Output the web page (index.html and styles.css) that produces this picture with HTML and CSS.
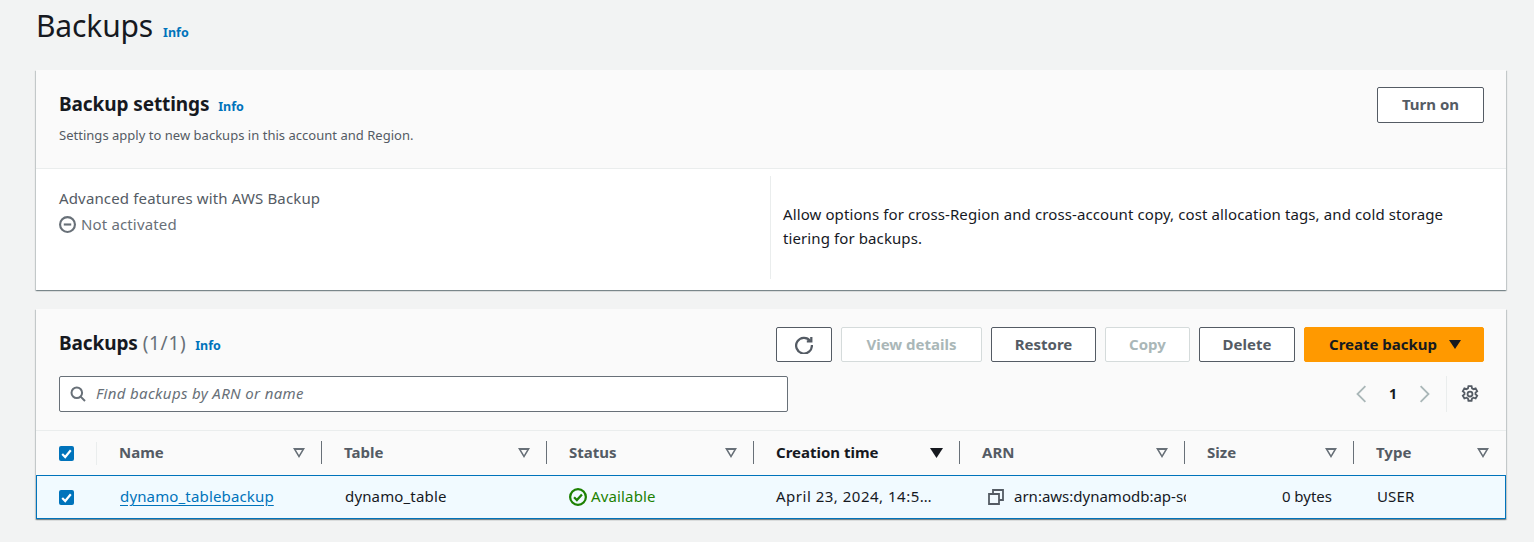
FILE: index.html
```html
<!DOCTYPE html>
<html lang="en">
<head>
  <meta charset="UTF-8" />
  <title>Backups</title>
  <link rel="stylesheet" href="styles.css">
</head>
<body>
  <div class="page-title">
    <h1>Backups</h1>
    <a class="info">Info</a>
  </div>

  <section class="card">
    <div class="card-head settings-head">
      <div>
        <h2>Backup settings <a class="info">Info</a></h2>
        <p class="desc">Settings apply to new backups in this account and Region.</p>
      </div>
      <button class="btn turn-on">Turn on</button>
    </div>
    <div class="settings-body">
      <div class="settings-left">
        <div class="label">Advanced features with AWS Backup</div>
        <div class="muted-status">
          <svg class="icon" viewBox="0 0 16 16"><circle cx="8" cy="8" r="7" /><path d="M4.5 8h7" /></svg>
          Not activated
        </div>
      </div>
      <div class="settings-right">Allow options for cross-Region and cross-account copy, cost allocation tags, and cold storage tiering for backups.</div>
    </div>
  </section>

  <section class="card backups-card">
    <div class="card-head table-head">
      <div class="table-title-row">
        <h2>Backups <span class="count">(1/1)</span> <a class="info">Info</a></h2>
        <div class="actions">
          <button class="btn icon-btn">
            <svg class="icon refresh" viewBox="0 0 16 16"><path d="M13.5 4.2A7 7 0 1 0 15 8" /><path d="M14.5 0.8v4h-4" /></svg>
          </button>
          <button class="btn disabled view-details">View details</button>
          <button class="btn restore">Restore</button>
          <button class="btn disabled copy">Copy</button>
          <button class="btn delete">Delete</button>
          <button class="btn primary">Create backup <span class="caret"></span></button>
        </div>
      </div>
      <div class="filter-row">
        <label class="search">
          <svg class="icon" viewBox="0 0 16 16"><circle cx="6.8" cy="6.8" r="5.3" /><path d="M10.6 10.6l4.4 4.4" /></svg>
          <input type="text" placeholder="Find backups by ARN or name">
        </label>
        <div class="pager">
          <svg class="icon pager-arrow" viewBox="0 0 16 16"><path d="M11 1L4 8l7 7" /></svg>
          <span class="page-no">1</span>
          <svg class="icon pager-arrow" viewBox="0 0 16 16"><path d="M5 1l7 7-7 7" /></svg>
        </div>
        <div class="prefs">
          <svg class="icon gear" viewBox="0 0 16 16"><path d="M6.6 1h2.8l.4 2 1.3.7 1.9-.7 1.4 2.5-1.5 1.3v1.4l1.5 1.3-1.4 2.5-1.9-.7-1.3.7-.4 2H6.6l-.4-2-1.3-.7-1.9.7-1.4-2.5 1.5-1.3V6.8L1.6 5.5 3 3l1.9.7 1.3-.7z" /><circle cx="8" cy="8" r="2.2" /></svg>
        </div>
      </div>
    </div>

    <div class="row header-row">
      <div class="cell check-cell"><span class="checkbox"><svg viewBox="0 0 14 14"><path d="M3 7.5l2.8 2.8L11 4" /></svg></span></div>
      <div class="cell th">Name<span class="sort"></span></div>
      <div class="cell th">Table<span class="sort"></span></div>
      <div class="cell th">Status<span class="sort"></span></div>
      <div class="cell th active">Creation time<span class="sort down"></span></div>
      <div class="cell th">ARN<span class="sort"></span></div>
      <div class="cell th">Size<span class="sort"></span></div>
      <div class="cell th last">Type<span class="sort"></span></div>
    </div>
    <div class="row body-row">
      <div class="cell check-cell"><span class="checkbox"><svg viewBox="0 0 14 14"><path d="M3 7.5l2.8 2.8L11 4" /></svg></span></div>
      <div class="cell"><a class="link">dynamo_tablebackup</a></div>
      <div class="cell">dynamo_table</div>
      <div class="cell status-ok">
        <svg class="icon" viewBox="0 0 16 16"><circle cx="8" cy="8" r="7" /><path d="M4.5 8.2l2.5 2.5 4.5-5" /></svg>
        Available
      </div>
      <div class="cell date">April 23, 2024, 14:5…</div>
      <div class="cell arn">
        <svg class="icon" viewBox="0 0 16 16"><path d="M1 5h10v10H1z" /><path d="M5 5V1h10v10h-4" /></svg>
        <span class="arn-text">arn:aws:dynamodb:ap-southeast-1</span>
      </div>
      <div class="cell size">0 bytes</div>
      <div class="cell">USER</div>
    </div>
  </section>
</body>
</html>
```

FILE: styles.css
```css
* { box-sizing: border-box; }
body {
  margin: 0;
  padding: 0 28px 0 36px;
  height: 542px;
  overflow: hidden;
  background-color: #f2f3f3;
  color: #16191f;
  font-family: "Noto Sans", "Open Sans", sans-serif;
  font-size: 15px;
  letter-spacing: 0.15px;
  line-height: 20px;
}
h1, h2, p { margin: 0; }

.page-title {
  display: flex;
  align-items: baseline;
  height: 70px;
  padding-top: 6px;
}
.page-title h1 {
  font-size: 30px;
  font-weight: 400;
  line-height: 40px;
  letter-spacing: -0.15px;
}
.page-title .info { margin-left: 10px; }
.info {
  color: #0073bb;
  font-size: 12.5px;
  font-weight: 700;
  letter-spacing: 0;
}

.card {
  background: #fff;
  box-shadow: 0 1px 1px 0 rgba(0, 28, 36, 0.3), 1px 1px 1px 0 rgba(0, 28, 36, 0.15), -1px 1px 1px 0 rgba(0, 28, 36, 0.15);
}
.card-head {
  background: #fafafa;
  border-bottom: 1px solid #eaeded;
}
.card h2 {
  font-size: 19px;
  font-weight: 700;
  line-height: 24px;
  letter-spacing: -0.1px;
}
.card h2 .info { margin-left: 4px; }

.settings-head {
  display: flex;
  justify-content: space-between;
  height: 99px;
  padding: 22px 22px 0 23px;
}
.settings-head > .btn { margin-top: -5px; }
.desc {
  margin-top: 8px;
  color: #545b64;
  font-size: 13px;
  letter-spacing: 0.02px;
  line-height: 16px;
}

.btn {
  height: 35px;
  padding: 0 20px 2px;
  background: #fff;
  border: 1px solid #545b64;
  border-radius: 2px;
  color: #545b64;
  font-family: inherit;
  font-size: 15px;
  font-weight: 700;
  letter-spacing: 0;
  line-height: 18px;
  white-space: nowrap;
}
.turn-on { width: 107px; height: 36px; }
.btn.disabled {
  border-color: #d5dbdb;
  color: #aab7b8;
}
.btn.primary {
  display: flex;
  align-items: center;
  justify-content: space-between;
  width: 180px;
  padding: 0 22px 2px 24px;
  background: #ff9900;
  border-color: #ff9900;
  color: #16191f;
}
.caret {
  width: 0;
  height: 0;
  margin-top: 2px;
  border-left: 6px solid transparent;
  border-right: 6px solid transparent;
  border-top: 9px solid #16191f;
}

.icon {
  width: 16px;
  height: 16px;
  flex: none;
  fill: none;
  stroke: currentColor;
  stroke-width: 2;
}

.settings-body {
  display: flex;
  height: 121px;
  padding-top: 7px;
}
.settings-left {
  width: 735px;
  height: 103px;
  padding: 12px 0 0 23px;
  border-right: 1px solid #eaeded;
  color: #545b64;
}
.muted-status {
  display: flex;
  align-items: center;
  gap: 5px;
  margin-top: 6px;
  color: #687078;
}
.muted-status .icon { width: 17px; height: 17px; }
.settings-right {
  width: 680px;
  padding: 26px 0 0 12px;
  letter-spacing: 0.1px;
  line-height: 24px;
}

.backups-card { margin-top: 19px; height: 210px; }
.table-head {
  height: 122px;
  padding: 18px 22px 0 23px;
}
.table-title-row {
  display: flex;
  align-items: center;
  justify-content: space-between;
  height: 35px;
}
.count { color: #687078; font-weight: 400; letter-spacing: 0.7px; }
.actions { display: flex; gap: 9px; }
.icon-btn { display: flex; align-items: center; justify-content: center; width: 56px; padding: 0; }
.refresh { width: 18px; height: 18px; }
.view-details { width: 141px; padding: 0 0 2px; }
.restore { width: 105px; padding: 0 0 2px; }
.copy { width: 85px; padding: 0 0 2px; }
.delete { width: 96px; padding: 0 0 2px; }

.filter-row {
  display: flex;
  align-items: center;
  margin-top: 14px;
}
.search {
  display: flex;
  align-items: center;
  gap: 10px;
  width: 729px;
  height: 36px;
  padding: 0 10px;
  background: #fff;
  border: 1px solid #687078;
  border-radius: 2px;
  color: #687078;
}
.search input {
  flex: 1;
  height: 20px;
  margin-bottom: 2px;
  border: none;
  outline: none;
  background: none;
  padding: 0;
  font-family: inherit;
  font-size: 15px;
  font-style: italic;
  letter-spacing: 0.35px;
}
.search input::placeholder { color: #687078; opacity: 1; }
.pager {
  display: flex;
  align-items: center;
  gap: 13px;
  margin-left: auto;
  margin-right: 1px;
  color: #aab7b8;
}
.page-no {
  width: 18px;
  color: #16191f;
  font-size: 14px;
  font-weight: 700;
  text-align: center;
}
.pager-arrow { width: 18px; height: 18px; stroke-width: 1.6; }
.prefs {
  display: flex;
  align-items: center;
  height: 36px;
  margin-left: 12px;
  padding: 0 5px 0 14px;
  border-left: 1px solid #eaeded;
  color: #545b64;
}
.gear { width: 18px; height: 18px; stroke-width: 1.6; }

.row {
  display: grid;
  grid-template-columns: 61px 225px 225px 207px 206px 225px 169px 152px;
}
.cell {
  display: flex;
  align-items: center;
  min-width: 0;
  padding: 0 0 2px 22px;
  white-space: nowrap;
}
.check-cell { padding: 0 0 0 23px; }
.checkbox {
  display: block;
  width: 15px;
  height: 15px;
  border-radius: 2px;
  background: #0073bb;
}
.checkbox svg {
  display: block;
  width: 15px;
  height: 15px;
  fill: none;
  stroke: #fff;
  stroke-width: 2;
}
.header-row {
  height: 44px;
  background: #fafafa;
}
.header-row .check-cell {
  height: 23px;
  align-self: center;
  border-right: 1px solid #eaeded;
}
.th {
  position: relative;
  justify-content: space-between;
  padding-right: 17px;
  color: #545b64;
  font-weight: 700;
  letter-spacing: 0;
}
.th::after {
  content: "";
  position: absolute;
  top: 10px;
  right: 0;
  width: 1px;
  height: 23px;
  background: #687078;
}
.th.last::after { display: none; }
.th.active { color: #16191f; }
.sort {
  width: 12px;
  height: 10px;
  margin-top: 2px;
  background: #687078;
  clip-path: polygon(0 0, 100% 0, 50% 100%, 0 0, 3px 2px, 50% calc(100% - 3px), calc(100% - 3px) 2px, 3px 2px);
}
.sort.down {
  width: 13px;
  background: #16191f;
  clip-path: polygon(0 0, 100% 0, 50% 100%);
}
.body-row {
  height: 44px;
  background: #f1faff;
  border: 1px solid #0073bb;
}
.body-row .cell { padding-left: 22px; }
.body-row .check-cell { padding: 0 0 0 22px; }
.link {
  color: #0073bb;
  text-decoration: underline;
  text-underline-offset: 3px;
}
.status-ok {
  gap: 4px;
  color: #1d8102;
}
.status-ok .icon { width: 18px; height: 18px; margin-left: -1px; margin-top: 2px; }
.date { margin-left: -1px; letter-spacing: 0.5px; }
.arn .icon { color: #545b64; margin: 2px 10px 0 5px; stroke-width: 1.8; }
.arn-text { overflow: hidden; letter-spacing: 0; }
.body-row .size { justify-content: flex-end; padding-right: 23px; letter-spacing: 0; }
```
